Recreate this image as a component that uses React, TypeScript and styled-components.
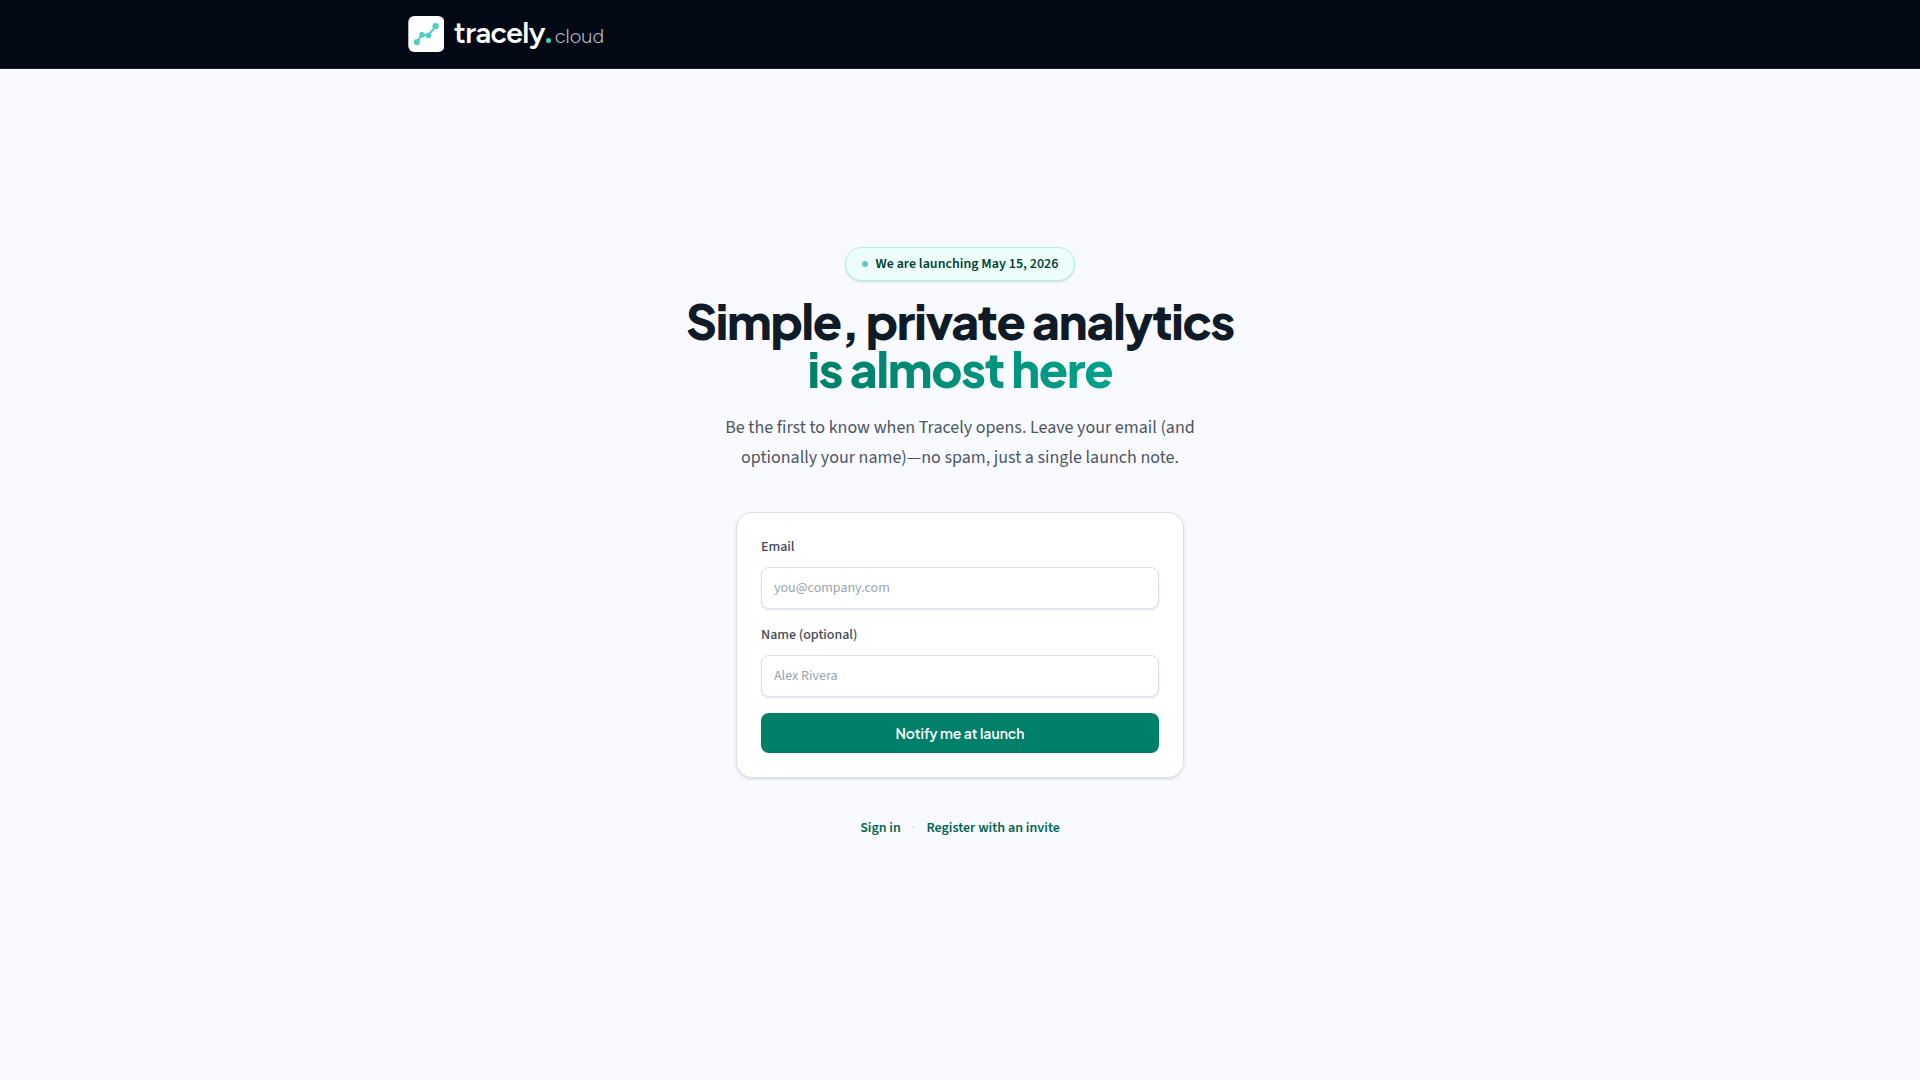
import React from "react";
import styled, { createGlobalStyle } from "styled-components";

const body = `"Source Sans 3", "Noto Sans", sans-serif`;
const display = `"Plus Jakarta Sans", Inter, sans-serif`;

const GlobalStyle = createGlobalStyle`
  *, *::before, *::after { box-sizing: border-box; }
  body { margin: 0; background: #f9faff; font-family: ${body}; }
`;

const Page = styled.div`
  display: flex;
  flex-direction: column;
  min-height: 100vh;
`;

const Header = styled.header`
  background: #020915;
  border-bottom: 1px solid #17202d;
`;

const HeaderInner = styled.div`
  display: flex;
  align-items: center;
  max-width: 1152px;
  margin: 0 auto;
  padding: 16px 24px;
`;

const Brand = styled.a`
  display: flex;
  align-items: center;
  gap: 10px;
  color: #ffffff;
  text-decoration: none;
`;

const Wordmark = styled.span`
  display: flex;
  align-items: baseline;
  height: 36px;
  font: 600 30px/34px Figtree, Inter, sans-serif;
  letter-spacing: -0.02em;
`;

const Dot = styled.span`
  width: 5px;
  height: 5px;
  margin-left: 1px;
  border-radius: 50%;
  background: #44cdbb;
`;

const Suffix = styled.span`
  margin-left: 4px;
  color: #b4bdc8;
  font-size: 20px;
  font-weight: 300;
  letter-spacing: 0;
`;

const Main = styled.main`
  flex: 1;
  display: flex;
  flex-direction: column;
  align-items: center;
  justify-content: center;
  padding: 0 24px 64px;
  text-align: center;
`;

const Pill = styled.p`
  display: flex;
  align-items: center;
  gap: 8px;
  margin: 0;
  padding: 6px 16px;
  border: 1px solid #b1f0e2;
  border-radius: 999px;
  background: #ecfffb;
  box-shadow: 0 1px 2px rgba(15, 23, 42, 0.16);
  color: #033f36;
  font-size: 14px;
  font-weight: 600;
  line-height: 20px;

  &::before {
    content: "";
    width: 6px;
    height: 6px;
    border-radius: 50%;
    background: #5fc9bc;
  }
`;

const Title = styled.h1`
  margin: 16px 0 0;
  color: #0f1b27;
  font: 800 48px/48px ${display};
  letter-spacing: -0.025em;
`;

const Accent = styled.span`
  display: block;
  width: fit-content;
  margin: 0 auto;
  background: linear-gradient(90deg, #007f69, #00a18b);
  background-clip: text;
  -webkit-background-clip: text;
  color: transparent;
`;

const Lead = styled.p`
  max-width: 512px;
  margin: 20px 0 39px;
  color: #4c5763;
  font-size: 18px;
  line-height: 30px;
`;

const Card = styled.form`
  display: flex;
  flex-direction: column;
  gap: 16px;
  width: 100%;
  max-width: 448px;
  padding: 24px;
  border: 1px solid #dbe1e9;
  border-radius: 16px;
  background: #ffffff;
  box-shadow: 0 1px 3px rgba(15, 23, 42, 0.14);
  text-align: left;
`;

const Field = styled.div`
  display: flex;
  flex-direction: column;
  gap: 10px;
`;

const Label = styled.label`
  color: #3d4855;
  font-size: 14px;
  font-weight: 500;
  line-height: 20px;
`;

const Input = styled.input`
  width: 100%;
  height: 42px;
  padding: 0 12px;
  border: 1px solid #dbe1e9;
  border-radius: 8px;
  background: #ffffff;
  box-shadow: 0 1px 2px rgba(15, 23, 42, 0.12);
  color: #0f1b27;
  font: 400 14px/20px ${body};

  &::placeholder { color: #9aa4af; opacity: 1; }
`;

const Submit = styled.button`
  height: 40px;
  border: 0;
  border-radius: 8px;
  background: #007f69;
  color: #ffffff;
  font: 600 14px/20px ${display};
  cursor: pointer;
`;

const Links = styled.nav`
  display: flex;
  align-items: center;
  gap: 11px;
  margin-top: 40px;
  color: #c3cad3;
  font-size: 14px;
  line-height: 20px;
`;

const TextLink = styled.a`
  color: #006650;
  font-weight: 600;
  text-decoration: none;
`;

function LogoMark() {
  return (
    <svg width="36" height="36" viewBox="0 0 36 36" aria-hidden="true">
      <rect x="0.3" width="36" height="36" rx="6" fill="#fff" />
      <g fill="#4ecdc0">
        <path d="M9 26 14 18.7 20.5 19.3 27.6 10.2" fill="none" stroke="#4ecdc0" strokeWidth="2" strokeLinejoin="round" />
        <circle cx="9" cy="26" r="3.1" />
        <circle cx="14" cy="18.7" r="2.8" />
        <circle cx="20.5" cy="19.3" r="2.8" />
        <circle cx="27.6" cy="10.2" r="3.1" />
      </g>
    </svg>
  );
}

export default function App() {
  return (
    <Page>
      <GlobalStyle />
      <Header>
        <HeaderInner>
          <Brand href="/" aria-label="tracely.cloud">
            <LogoMark />
            <Wordmark>
              tracely<Dot /><Suffix>cloud</Suffix>
            </Wordmark>
          </Brand>
        </HeaderInner>
      </Header>
      <Main>
        <Pill>We are launching May 15, 2026</Pill>
        <Title>
          Simple, private analytics <Accent>is almost here</Accent>
        </Title>
        <Lead>
          Be the first to know when Tracely opens. Leave your email (and optionally your name)—no spam, just a single launch note.
        </Lead>
        <Card>
          <Field>
            <Label htmlFor="email">Email</Label>
            <Input id="email" type="email" placeholder="you@company.com" />
          </Field>
          <Field>
            <Label htmlFor="name">Name (optional)</Label>
            <Input id="name" type="text" placeholder="Alex Rivera" />
          </Field>
          <Submit type="submit">Notify me at launch</Submit>
        </Card>
        <Links>
          <TextLink href="/login">Sign in</TextLink>
          <span aria-hidden="true">·</span>
          <TextLink href="/register">Register with an invite</TextLink>
        </Links>
      </Main>
    </Page>
  );
}
